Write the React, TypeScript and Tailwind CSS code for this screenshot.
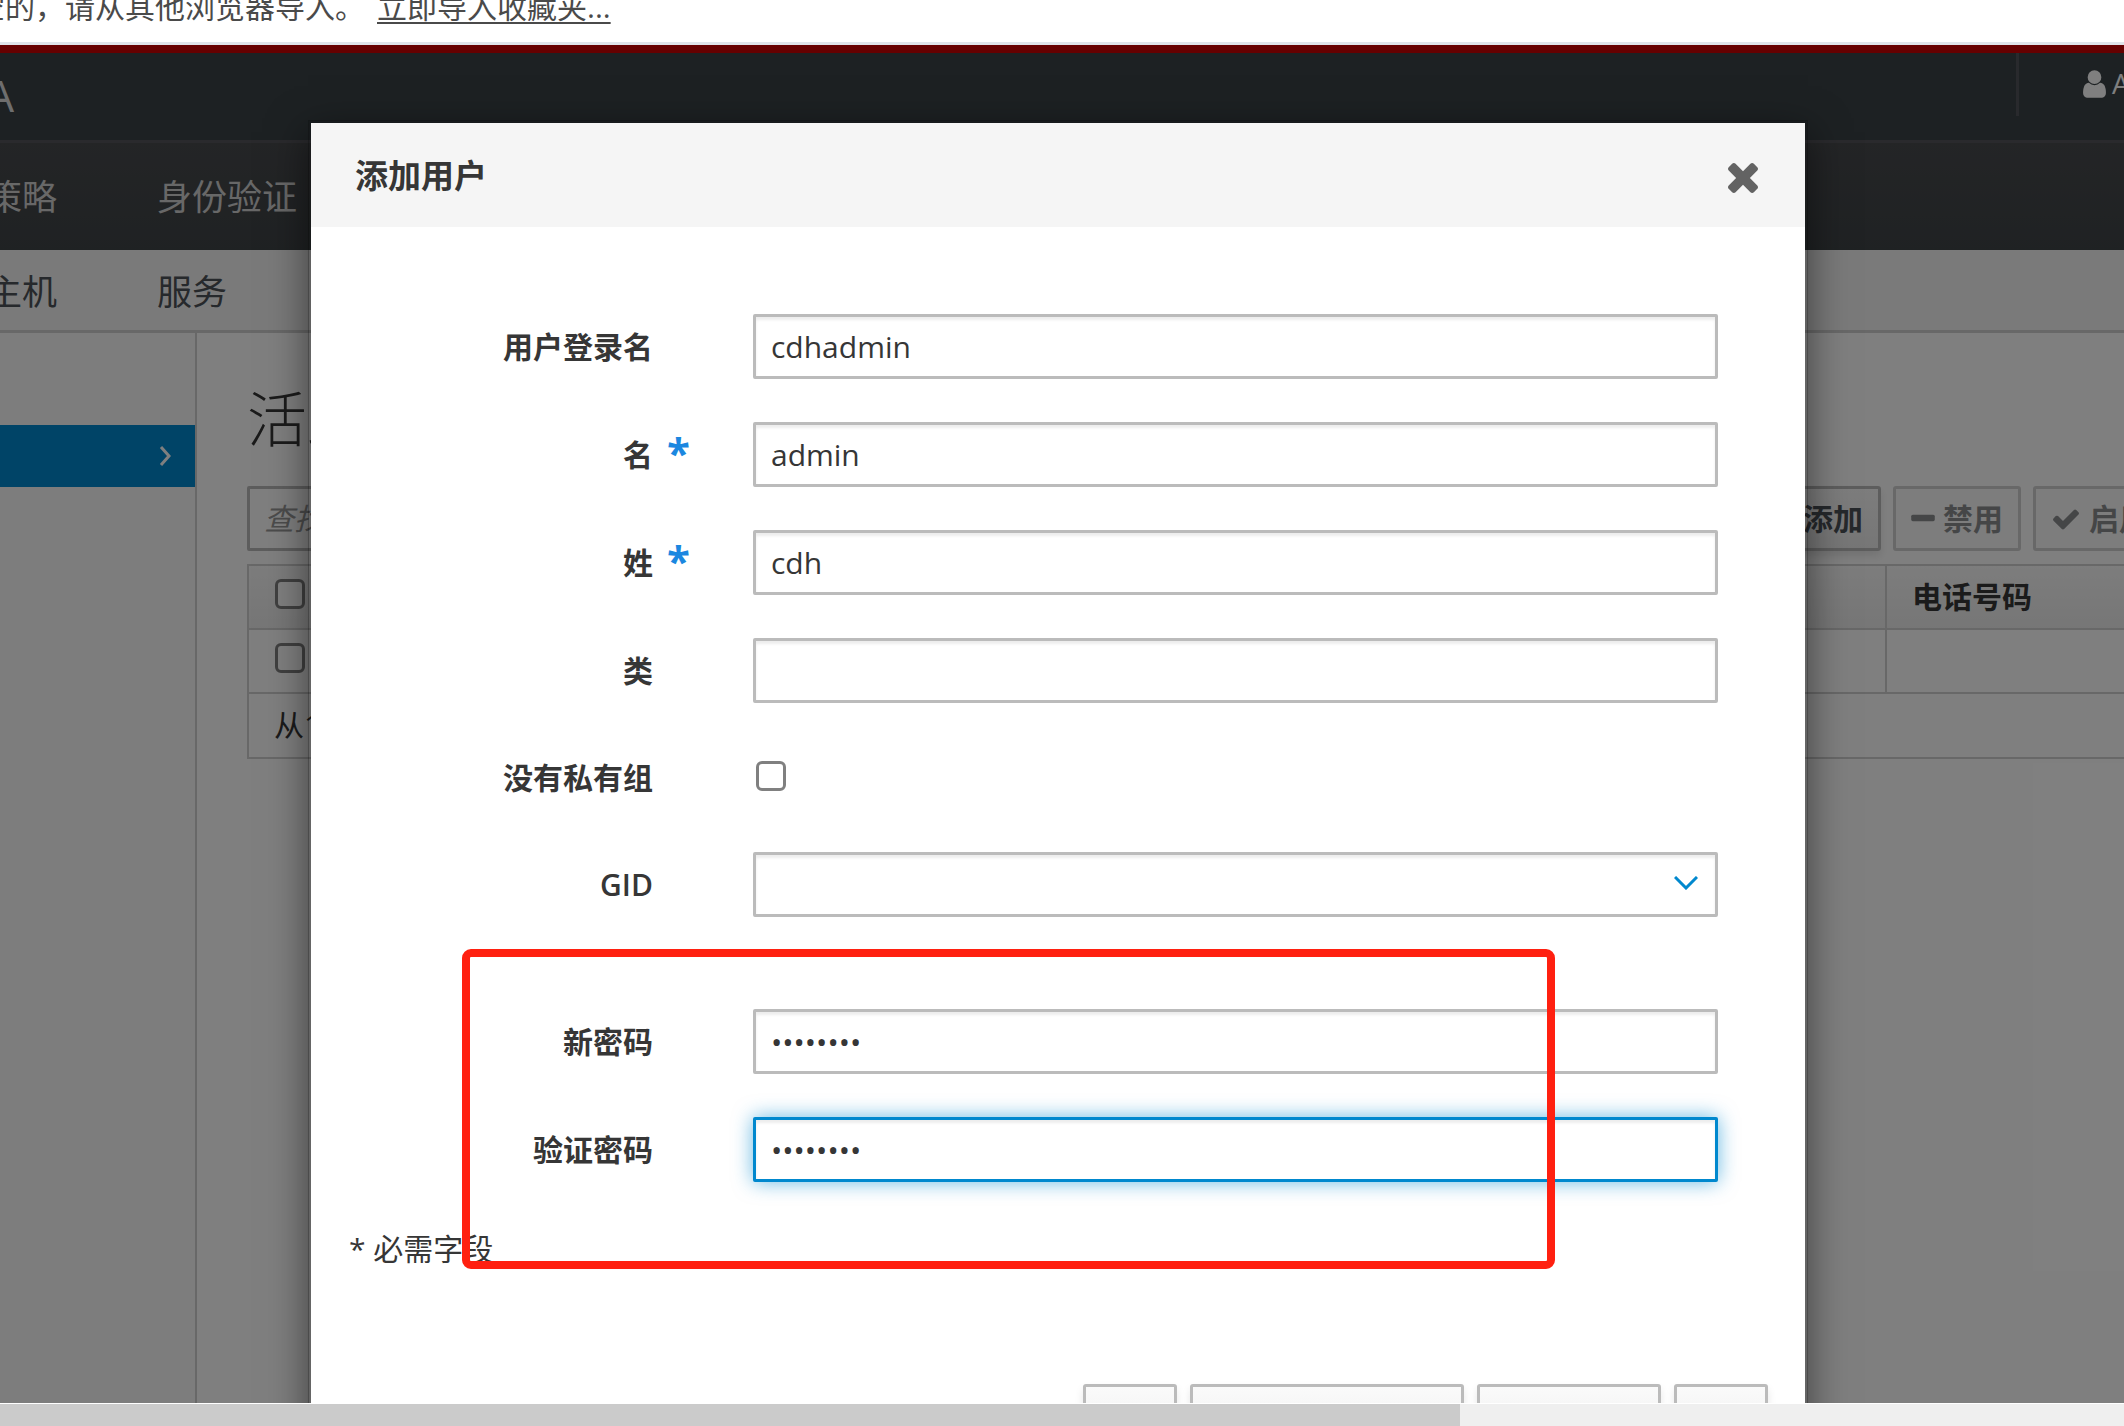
import React from "react";
import { FaPlus } from "react-icons/fa";

const fieldClass =
  "block h-[65px] w-full appearance-none rounded-[2px] border-[3px] border-[#bbb] bg-white px-[15px] text-[30px] text-[#363636] shadow-[inset_0_3px_3px_rgba(0,0,0,0.075)] outline-none focus:border-[#0088ce] focus:shadow-[inset_0_3px_3px_rgba(0,0,0,0.075),0_0_20px_rgba(0,136,206,0.6)]";

const checkboxClass =
  "block size-[30px] shrink-0 appearance-none rounded-[6px] border-[3px] border-[#808080] bg-white";

const buttonClass =
  "flex h-[65px] shrink-0 items-center gap-2 whitespace-nowrap rounded-[3px] border-[3px] border-[#bbb] bg-linear-to-b from-[#fafafa] to-[#ededed] px-[15px] font-semibold text-[#4d5258] shadow-[0_5px_8px_rgba(3,3,3,0.1)]";

const disabledButtonClass =
  "flex h-[65px] shrink-0 items-center gap-2 whitespace-nowrap rounded-[3px] border-[3px] border-[#d1d1d1] bg-[#fafafa] px-[15px] font-semibold text-[#8b8d8f]";

const footerButtonClass =
  "flex h-[72px] shrink-0 items-center whitespace-nowrap rounded-[3px] border-[3px] border-[#bbb] bg-linear-to-b from-[#fafafa] to-[#ededed] px-[14px] font-semibold text-[#4d5258] shadow-[0_5px_8px_rgba(3,3,3,0.1)]";

const UserIcon = () => (
  <svg viewBox="0 0 1280 1792" className="h-[32px] w-[23px] shrink-0" fill="currentColor" aria-hidden="true">
    <path d="M1280 1399q0 109-62.5 187t-150.5 78h-854q-88 0-150.5-78t-62.5-187q0-85 8.5-160.5t31.5-152 58.5-131 94-89 134.5-34.5q131 128 313 128t313-128q76 0 134.5 34.5t94 89 58.5 131 31.5 152 8.5 160.5zm-256-887q0 159-112.5 271.5t-271.5 112.5-271.5-112.5-112.5-271.5 112.5-271.5 271.5-112.5 271.5 112.5 112.5 271.5z" />
  </svg>
);

const CloseIcon = () => (
  <svg viewBox="302 366 1188 1188" className="size-[30px]" fill="currentColor" aria-hidden="true">
    <path d="M1490 1322q0 40-28 68l-136 136q-28 28-68 28t-68-28l-294-294-294 294q-28 28-68 28t-68-28l-136-136q-28-28-28-68t28-68l294-294-294-294q-28-28-28-68t28-68l136-136q28-28 68-28t68 28l294 294 294-294q28-28 68-28t68 28l136 136q28 28 28 68t-28 68l-294 294 294 294q28 28 28 68z" />
  </svg>
);

const MinusIcon = () => (
  <svg viewBox="192 0 1408 1792" className="h-[30px] w-[24px] shrink-0" fill="currentColor" aria-hidden="true">
    <path d="M1600 736v192q0 40-28 68t-68 28h-1216q-40 0-68-28t-28-68v-192q0-40 28-68t68-28h1216q40 0 68 28t28 68z" />
  </svg>
);

const CheckIcon = () => (
  <svg viewBox="0 0 1792 1792" className="size-[30px] shrink-0" fill="currentColor" aria-hidden="true">
    <path d="M1671 566q0 40-28 68l-724 724-136 136q-28 28-68 28t-68-28l-136-136-362-362q-28-28-28-68t28-68l136-136q28-28 68-28t68 28l294 295 656-657q28-28 68-28t68 28l136 136q28 28 28 68z" />
  </svg>
);

type FieldProps = {
  id: string;
  label: string;
  required?: boolean;
  children: React.ReactNode;
};

const Field: React.FC<FieldProps> = ({ id, label, required, children }) => (
  <div className="flex items-center">
    <div className="relative mr-[100px] w-[304px] shrink-0 text-right font-semibold">
      <label htmlFor={id}>{label}</label>
      {required && (
        <span className="absolute -top-1 left-full ml-[14px] text-[42px] leading-[48px] font-bold text-[#1b87e0]">*</span>
      )}
    </div>
    <div className="relative min-w-0 flex-1">{children}</div>
  </div>
);

const NoticeBar = () => (
  <div className="flex h-[45px] shrink-0 items-start gap-3 overflow-hidden whitespace-nowrap border-b-[3px] border-[#dfe4ea] bg-white text-[30px] leading-[14px] text-[#4a4a4a]">
    <div className="flex w-[365px] shrink-0 justify-end">空的，请从其他浏览器导入。</div>
    <a href="#import" className="underline decoration-2 underline-offset-4">立即导入收藏夹...</a>
  </div>
);

const Masthead = () => (
  <header className="border-t-8 border-[#cc0000] bg-[#3b4246]">
    <div className="flex h-[87px] items-start">
      <div className="flex h-[84px] w-[14px] items-center justify-end text-[44px] text-[#ddd]">A</div>
      <div className="flex-1" />
      <div className="flex h-[63px] w-[108px] items-center gap-[6px] overflow-hidden border-l-[3px] border-[#52545a] pb-[2px] pl-[64px] text-[28px] text-white">
        <UserIcon />
        <span>Administrator</span>
      </div>
    </div>
    <nav className="flex h-[110px] items-center gap-[100px] whitespace-nowrap border-t-[3px] border-[#54555a] bg-linear-to-b from-[#484a4d] to-[#3f4447] text-[35px] text-[#d1d1d1]">
      <a href="#policy" className="flex w-[57px] justify-end">策略</a>
      <a href="#auth">身份验证</a>
    </nav>
    <nav className="flex h-[83px] items-center gap-[100px] whitespace-nowrap border-b-[3px] border-[#d1d1d1] bg-[#f5f5f5] pt-[2px] text-[35px] text-[#4d5258]">
      <a href="#hosts" className="flex w-[57px] justify-end">主机</a>
      <a href="#services">服务</a>
    </nav>
  </header>
);

const UsersPage = () => (
  <div className="flex flex-1 overflow-hidden">
    <aside className="w-[197px] shrink-0 border-r-2 border-[#d1d1d1] bg-[#fafafa] pt-[92px]">
      <a href="#active" className="flex h-[62px] items-center justify-end bg-[#0088ce] pr-6 text-white" aria-label="活跃用户">
        <svg viewBox="0 0 12 20" className="h-[20px] w-[12px]" fill="none" stroke="currentColor" strokeWidth="3" aria-hidden="true">
          <path d="M2 1l8 9-8 9" />
        </svg>
      </a>
    </aside>

    <main className="min-w-0 flex-1 pl-[50px]">
      <h1 className="mt-[41px] mb-[22px] text-[60px] leading-[90px] font-light">活跃用户</h1>
      <div className="flex justify-between">
        <input
          type="text"
          aria-label="查找"
          placeholder="查找"
          className="h-[65px] w-[500px] rounded-[2px] border-[3px] border-[#bbb] bg-white px-[14px] placeholder:text-[#999] placeholder:italic"
        />
        <div className="flex w-[371px] shrink-0 gap-3">
          <button type="button" className={buttonClass}>
            <FaPlus className="w-[24px]" />
            添加
          </button>
          <button type="button" disabled className={disabledButtonClass}>
            <MinusIcon />
            禁用
          </button>
          <button type="button" disabled className={disabledButtonClass}>
            <CheckIcon />
            启用
          </button>
        </div>
      </div>

      <table className="mt-[13px] w-full table-fixed border-separate border-spacing-0 border-t-2 border-l-2 border-[#d1d1d1] text-left">
        <thead>
          <tr className="h-[64px] bg-linear-to-b from-[#fafafa] to-[#ededed]">
            <th className="border-b-2 border-[#d1d1d1] px-[26px] pb-[6px]">
              <input type="checkbox" aria-label="全选" className={checkboxClass} />
            </th>
            <th className="w-[239px] border-b-2 border-l-2 border-[#d1d1d1] px-[25px] pb-[2px] font-semibold">电话号码</th>
          </tr>
        </thead>
        <tbody>
          <tr className="h-[64px]">
            <td className="border-b-2 border-[#d1d1d1] px-[26px] pb-[6px]">
              <input type="checkbox" aria-label="选择" className={checkboxClass} />
            </td>
            <td className="border-b-2 border-l-2 border-[#d1d1d1]" />
          </tr>
        </tbody>
        <tfoot>
          <tr className="h-[65px]">
            <td colSpan={2} className="border-b-2 border-[#d1d1d1] px-[25px] pb-[2px]">从1到1条记录</td>
          </tr>
        </tfoot>
      </table>
    </main>
  </div>
);

const AddUserDialog = () => (
  <div
    role="dialog"
    aria-labelledby="dialog-title"
    className="border-[3px] border-black/20 bg-white bg-clip-padding shadow-[0_12px_38px_rgba(0,0,0,0.5)]"
  >
    <div className="flex h-[104px] items-center justify-between bg-[#f5f5f5] pr-[47px] pl-[44px]">
      <h2 id="dialog-title" className="text-[33px] font-bold">添加用户</h2>
      <button type="button" aria-label="关闭" className="pt-[6px] text-[#636363]">
        <CloseIcon />
      </button>
    </div>

    <form className="pt-[87px] pr-[37px] pl-[38px]">
      <div className="flex flex-col gap-[43px] pr-[50px]">
        <Field id="login" label="用户登录名">
          <input id="login" type="text" defaultValue="cdhadmin" className={fieldClass} />
        </Field>
        <Field id="first" label="名" required>
          <input id="first" type="text" defaultValue="admin" className={fieldClass} />
        </Field>
        <Field id="last" label="姓" required>
          <input id="last" type="text" defaultValue="cdh" className={fieldClass} />
        </Field>
        <Field id="class" label="类">
          <input id="class" type="text" className={fieldClass} />
        </Field>
        <Field id="noprivate" label="没有私有组">
          <div className="flex h-[63px] items-center pb-1 pl-[3px]">
            <input id="noprivate" type="checkbox" className={checkboxClass} />
          </div>
        </Field>
        <Field id="gid" label="GID">
          <select id="gid" className={fieldClass} />
          <svg viewBox="0 0 24 14" className="pointer-events-none absolute top-[24px] right-[20px] h-[14px] w-[24px]" fill="none" stroke="#0088ce" strokeWidth="3" aria-hidden="true">
            <path d="M1 1l11 11L23 1" />
          </svg>
        </Field>
      </div>

      <div className="mt-[92px] flex flex-col gap-[43px] pr-[50px]">
        <Field id="password" label="新密码">
          <input id="password" type="password" defaultValue="password" className={fieldClass} />
        </Field>
        <Field id="verify" label="验证密码">
          <input id="verify" type="password" defaultValue="password" autoFocus className={fieldClass} />
        </Field>
      </div>

      <p className="mt-[44px] leading-[45px]">* 必需字段</p>

      <div className="mt-[113px] flex justify-end gap-[13px] pb-[38px]">
        <button type="button" className={footerButtonClass}>添加</button>
        <button type="button" className={footerButtonClass}>添加并添加另一个</button>
        <button type="button" className={footerButtonClass}>添加并编辑</button>
        <button type="button" className={footerButtonClass}>取消</button>
      </div>
    </form>
  </div>
);

const App: React.FC = () => {
  return (
    <div className="flex h-screen flex-col overflow-hidden bg-white font-['Open_Sans','Noto_Sans_CJK_SC',sans-serif] text-[30px] leading-[45px] text-[#363636]">
      <NoticeBar />

      <div className="relative flex min-h-0 flex-1 flex-col overflow-hidden">
        <Masthead />
        <UsersPage />

        {/* Backdrop with the dialog */}
        <div className="absolute inset-0 overflow-hidden bg-black/50 pt-[75px] pr-[316px] pl-[308px]">
          <AddUserDialog />
        </div>

        {/* Highlight around the password fields */}
        <div className="pointer-events-none absolute top-[904px] right-[569px] left-[462px] h-[320px] rounded-[9px] border-8 border-[#ff2010]" />
      </div>

      {/* Horizontal scrollbar */}
      <div className="mt-px h-[22px] shrink-0 bg-[#efefef]">
        <div className="h-full w-[68.75%] bg-[#cbcbcb]" />
      </div>
    </div>
  );
};

export default App;
